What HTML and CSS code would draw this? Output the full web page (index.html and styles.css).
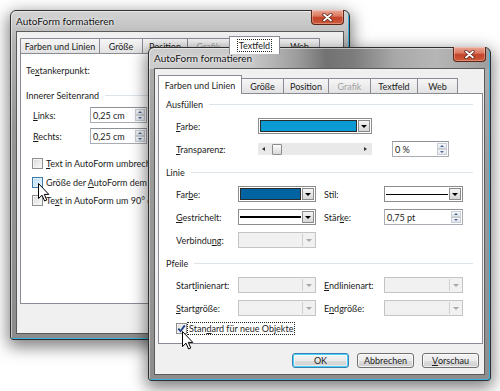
FILE: index.html
```html
<!DOCTYPE html>
<html lang="de">
<head>
<meta charset="utf-8">
<title>AutoForm formatieren</title>
<link rel="stylesheet" href="styles.css">
</head>
<body>
<div class="win back">
  <div class="titlebar">
    <span class="title">AutoForm formatieren</span>
    <span class="close"><svg width="11" height="9" viewBox="0 0 11 9"><path d="M2 1.5 L9 7.5 M9 1.5 L2 7.5" stroke="#5a2418" stroke-width="3.4" stroke-linecap="round"/><path d="M2 1.5 L9 7.5 M9 1.5 L2 7.5" stroke="#fff" stroke-width="1.8" stroke-linecap="round"/></svg></span>
  </div>
  <div class="client">
    <div class="tabs">
      <span class="tab w79">Farben und Linien</span>
      <span class="tab w43">Größe</span>
      <span class="tab w45">Position</span>
      <span class="tab w42 dis">Grafik</span>
      <span class="tab w50 active"><span class="focus">Textfeld</span></span>
      <span class="tab w40">Web</span>
    </div>
    <div class="panel bpanel">
      <div class="brow first">Te<u>x</u>tankerpunkt:</div>
      <div class="sec bsec"><span>Innerer Seitenrand</span></div>
      <div class="bfield">
        <span class="blbl"><u>L</u>inks:</span>
        <span class="spin bspin"><span class="v">0,25 cm</span><span class="sb"><i class="up"></i><i class="dn"></i></span></span>
      </div>
      <div class="bfield">
        <span class="blbl"><u>R</u>echts:</span>
        <span class="spin bspin"><span class="v">0,25 cm</span><span class="sb"><i class="up"></i><i class="dn"></i></span></span>
      </div>
      <div class="bcheck c1"><span class="cb"></span><span><u>T</u>ext in AutoForm umbrechen</span></div>
      <div class="bcheck c2"><span class="cb hover"></span><span>Größe der <u>A</u>utoForm dem Text anpassen</span></div>
      <div class="bcheck c3"><span class="cb"></span><span>Te<u>x</u>t in AutoForm um 90° drehen</span></div>
    </div>
  </div>
</div>

<div class="win front">
  <div class="titlebar">
    <span class="title">AutoForm formatieren</span>
    <span class="close"><svg width="11" height="9" viewBox="0 0 11 9"><path d="M2 1.5 L9 7.5 M9 1.5 L2 7.5" stroke="#5a2418" stroke-width="3.4" stroke-linecap="round"/><path d="M2 1.5 L9 7.5 M9 1.5 L2 7.5" stroke="#fff" stroke-width="1.8" stroke-linecap="round"/></svg></span>
  </div>
  <div class="client">
    <div class="tabs">
      <span class="tab w83 active">Farben und Linien</span>
      <span class="tab w42">Größe</span>
      <span class="tab w45">Position</span>
      <span class="tab w42 dis">Grafik</span>
      <span class="tab w47">Textfeld</span>
      <span class="tab w40">Web</span>
    </div>
    <div class="panel fpanel">
      <div class="sec first"><span>Ausfüllen</span></div>
      <div class="frow">
        <span class="lbl"><u>F</u>arbe:</span>
        <span class="combo wide"><span class="val"><span class="swatch cyan"></span></span><span class="btn"></span></span>
      </div>
      <div class="frow">
        <span class="lbl"><u>T</u>ransparenz:</span>
        <span class="slider"><span class="arr l"></span><span class="thumb"></span><span class="arr r"></span></span>
        <span class="spin pct"><span class="v">0 %</span><span class="sb"><i class="up"></i><i class="dn"></i></span></span>
      </div>

      <div class="sec"><span>Linie</span></div>
      <div class="grid">
        <span class="lbl">Far<u>b</u>e:</span>
        <span class="combo"><span class="val"><span class="swatch blue"></span></span><span class="btn"></span></span>
        <span class="lbl rl">St<u>i</u>l:</span>
        <span class="combo"><span class="val"><span class="line thin"></span></span><span class="btn"></span></span>

        <span class="lbl"><u>G</u>estrichelt:</span>
        <span class="combo"><span class="val"><span class="line thick"></span></span><span class="btn"></span></span>
        <span class="lbl rl">Stär<u>k</u>e:</span>
        <span class="spin"><span class="v">0,75 pt</span><span class="sb"><i class="up"></i><i class="dn"></i></span></span>

        <span class="lbl">Verbindu<u>n</u>g:</span>
        <span class="combo dis"><span class="val"></span><span class="btn"></span></span>
      </div>

      <div class="sec"><span>Pfeile</span></div>
      <div class="grid">
        <span class="lbl">Start<u>l</u>inienart:</span>
        <span class="combo dis"><span class="val"></span><span class="btn"></span></span>
        <span class="lbl rl"><u>E</u>ndlinienart:</span>
        <span class="combo dis"><span class="val"></span><span class="btn"></span></span>

        <span class="lbl"><u>S</u>tartgröße:</span>
        <span class="combo dis"><span class="val"></span><span class="btn"></span></span>
        <span class="lbl rl">E<u>n</u>dgröße:</span>
        <span class="combo dis"><span class="val"></span><span class="btn"></span></span>
      </div>

      <div class="fcheck">
        <span class="cb checked"><svg width="9" height="9" viewBox="0 0 9 9"><path d="M1.2 4.6 L3.6 7.2 L7.8 1.4" fill="none" stroke="#1e3f86" stroke-width="1.8"/></svg></span>
        <span class="focus">Stan<u>d</u>ard für neue Objekte</span>
      </div>
    </div>
    <div class="buttons">
      <span class="button default">OK</span>
      <span class="button">Abbrechen</span>
      <span class="button"><u>V</u>orschau</span>
    </div>
  </div>
</div>

<svg class="cursor cur1" width="12" height="19" viewBox="0 0 12 19"><path d="M0.5 0.5 L0.5 15.5 L4 12.2 L6.6 18 L8.8 17 L6.3 11.4 L10.8 11.4 Z" fill="#fff" stroke="#000" stroke-width="1" stroke-linejoin="round"/></svg>
<svg class="cursor cur2" width="12" height="19" viewBox="0 0 12 19"><path d="M0.5 0.5 L0.5 15.5 L4 12.2 L6.6 18 L8.8 17 L6.3 11.4 L10.8 11.4 Z" fill="#fff" stroke="#000" stroke-width="1" stroke-linejoin="round"/></svg>
</body>
</html>
```

FILE: styles.css
```css
* { box-sizing: border-box; }
html, body { margin: 0; padding: 0; }
body {
  width: 500px;
  height: 391px;
  overflow: hidden;
  position: relative;
  background: #fff;
  font-family: Lato, "Noto Sans", sans-serif;
  font-size: 9px;
  color: #1c1c1c;
}
u { text-decoration: underline; text-underline-offset: 1px; }

/* ---------- window frame ---------- */
.win {
  position: absolute;
  display: flex;
  flex-direction: column;
  border: 1px solid #2f2f2f;
  border-radius: 6px 6px 3px 3px;
  padding: 0 5px 5px;
  background:
    linear-gradient(180deg, rgba(255,255,255,.25), rgba(255,255,255,0) 30px),
    linear-gradient(180deg, #c4c4c4 0, #b0b0b0 40px, #959595 120px, #8c8c8c 100%);
  box-shadow:
    inset -1px -1px 0 #35b2e0,
    inset 1px 1px 0 rgba(255,255,255,.5),
    0 5px 16px 2px rgba(0,0,0,.5);
}
.back { left: 10px; top: 10px; width: 340px; height: 330px; }
.front {
  left: 148px; top: 47px; width: 343px; height: 334px;
  background:
    linear-gradient(90deg, #cdcdcd 0, #c9c9c9 30%, #9a9a9a 44%, #727272 52%, #7c7c7c 60%, #a8a8a8 72%, #b6b6b6 84%, #9e9e9e 100%) top / 100% 21px no-repeat,
    linear-gradient(180deg, #b0b0b0 0, #9a9a9a 120px, #8d8d8d 100%);
}
.titlebar {
  flex: none;
  height: 20px;
  display: flex;
  align-items: center;
}
.title {
  font-size: 10px;
  color: #111;
  text-shadow: 0 0 5px rgba(255,255,255,.9), 0 0 2px rgba(255,255,255,.9);
}
.close {
  margin-left: auto;
  align-self: flex-start;
  width: 33px;
  height: 15px;
  margin-top: -1px;
  border: 1px solid #5e2517;
  border-top: none;
  border-radius: 0 0 4px 4px;
  background: linear-gradient(180deg, #eaa896 0, #dc7a61 42%, #c4432a 55%, #cf5a3b 100%);
  box-shadow: inset 0 0 0 1px rgba(255,255,255,.3);
  display: flex;
  align-items: center;
  justify-content: center;
}
.front .close { margin-right: -1px; }
.client {
  flex: 1;
  display: flex;
  flex-direction: column;
  border: 1px solid #5a5a5a;
  background: #f0f0f0;
  padding: 3px 1px 0 3px;
}
.front .client { padding-top: 6px; }

/* ---------- tabs ---------- */
.tabs {
  flex: none;
  height: 18px;
  display: flex;
  align-items: flex-end;
  padding-left: 1px;
}
.tab {
  height: 15px;
  border: 1px solid #898c95;
  border-bottom: none;
  margin-left: -1px;
  background: linear-gradient(180deg, #f6f6f6, #e2e2e2);
  display: flex;
  align-items: center;
  justify-content: center;
  white-space: nowrap;
}
.tab.active {
  height: 19px;
  margin-bottom: -1px;
  background: #fff;
  position: relative;
  z-index: 1;
}
.back .tab.active { height: 18px; }
.tab.dis { color: #a4a4a4; }
.w40 { width: 41px; } .w42 { width: 43px; } .w43 { width: 44px; }
.w45 { width: 46px; } .w47 { width: 48px; } .w50 { width: 51px; }
.w79 { width: 80px; } .w83 { width: 84px; }
.focus { outline: 1px dotted #222; outline-offset: 0; padding: 0 1px; }

.panel {
  flex: none;
  background: #fff;
  border: 1px solid #898c95;
  display: flex;
  flex-direction: column;
}
.bpanel { height: 251px; padding: 9px 6px 0 5px; }
.fpanel { height: 251px; padding: 3px 9px 0 7px; }

/* ---------- section headers ---------- */
.sec {
  height: 14px;
  margin-top: 8px;
  display: flex;
  align-items: center;
  gap: 6px;
}
.sec::after {
  content: "";
  flex: 1;
  height: 1px;
  background: #dce3e9;
}
.sec.first { margin-top: 0; }

/* ---------- back panel ---------- */
.brow { height: 14px; display: flex; align-items: center; }
.bsec { margin-top: 11px; width: 160px; }
.bfield { height: 16px; margin-top: 5px; display: flex; align-items: center; padding-left: 7px; }
.blbl { width: 57px; }
.bspin { width: 57px; }
.bcheck { height: 14px; display: flex; align-items: center; gap: 3px; padding-left: 6px; white-space: nowrap; }
.c1 { margin-top: 12px; }
.c2 { margin-top: 5px; }
.c3 { margin-top: 4px; }

/* ---------- front panel ---------- */
.frow {
  height: 16px;
  margin-top: 7px;
  display: flex;
  align-items: center;
  padding-left: 10px;
}
.frow .lbl { width: 82px; }
.grid {
  margin-top: 7px;
  padding-left: 10px;
  display: grid;
  grid-template-columns: 62px 78px 68px 79px;
  grid-auto-rows: 16px;
  row-gap: 7px;
  align-items: center;
}
.lbl { white-space: nowrap; }
.rl { padding-left: 8px; }
.fcheck {
  margin-top: 5px;
  height: 14px;
  padding-left: 10px;
  display: flex;
  align-items: center;
  gap: 1px;
}

/* ---------- controls ---------- */
.combo {
  height: 16px;
  border: 1px solid #8c8c8c;
  background: #fff;
  display: flex;
  padding: 1px;
  gap: 1px;
}
.combo.wide { width: 114px; }
.combo .val { flex: 1; display: flex; align-items: center; }
.combo .btn {
  width: 12px;
  border: 1px solid #8a8a8a;
  background: linear-gradient(180deg, #f5f5f5, #d6d6d6);
  display: flex;
  align-items: center;
  justify-content: center;
}
.combo .btn::after {
  content: "";
  border-left: 3px solid transparent;
  border-right: 3px solid transparent;
  border-top: 3px solid #000;
}
.combo.dis { border-color: #c4c4c4; background: #f1f1f1; }
.combo.dis .btn { background: #f1f1f1; border: none; border-left: 1px solid #cfcfcf; }
.combo.dis .btn::after { border-top-color: #a8a8a8; }
.swatch { width: 100%; height: 100%; border: 1px solid #2a2a2a; }
.swatch.cyan { background: #0b9ad4; }
.swatch.blue { background: #0064a2; }
.line { width: 100%; background: #000; }
.line.thin { height: 1px; }
.line.thick { height: 2px; }

.slider {
  width: 114px;
  height: 12px;
  background: #e9e9e9;
  display: flex;
  align-items: center;
  padding: 0 5px 0 4px;
}
.arr { width: 0; height: 0; border-top: 2px solid transparent; border-bottom: 2px solid transparent; }
.arr.l { border-right: 3px solid #333; }
.arr.r { border-left: 3px solid #333; margin-left: auto; }
.thumb {
  width: 10px;
  height: 11px;
  margin-left: 7px;
  border: 1px solid #8d8d8d;
  border-radius: 1px;
  background: linear-gradient(180deg, #fdfdfd, #d8d8d8);
}
.pct { width: 57px; margin-left: 20px; }

.spin {
  height: 16px;
  border: 1px solid #a9acb3;
  border-top-color: #8e9196;
  background: #fff;
  display: flex;
}
.spin .v { flex: 1; display: flex; align-items: center; padding-left: 2px; white-space: nowrap; }
.sb { width: 11px; display: flex; flex-direction: column; gap: 0; padding: 1px 1px 1px 0; }
.sb i {
  flex: 1;
  border: 1px solid #c9ced6;
  background: linear-gradient(180deg, #f7f8fa, #e1e5eb);
  display: flex;
  align-items: center;
  justify-content: center;
}
.sb i::after { content: ""; border-left: 2px solid transparent; border-right: 2px solid transparent; }
.sb .up::after { border-bottom: 2px solid #4b6791; }
.sb .dn::after { border-top: 2px solid #4b6791; }

.cb {
  width: 11px;
  height: 11px;
  border: 1px solid #8e8f8f;
  background: linear-gradient(135deg, #d9d9d9, #fbfbfb);
  box-shadow: inset 0 0 0 1px #f4f4f4;
  display: flex;
  align-items: center;
  justify-content: center;
}
.cb.hover { border-color: #3d7bad; background: linear-gradient(135deg, #b9dcf3, #e8f5fd); box-shadow: inset 0 0 0 1px #def0fb; }
.cb.checked { background: linear-gradient(135deg, #dcdcdc, #fff); }

/* ---------- buttons ---------- */
.buttons {
  flex: none;
  display: flex;
  justify-content: flex-end;
  gap: 8px;
  padding: 9px 4px 0 0;
}
.button {
  width: 57px;
  height: 15px;
  border: 1px solid #707070;
  border-radius: 3px;
  background: linear-gradient(180deg, #f3f3f3 0, #ebebeb 50%, #dddddd 51%, #cfcfcf 100%);
  box-shadow: inset 0 0 0 1px rgba(255,255,255,.7);
  display: flex;
  align-items: center;
  justify-content: center;
}
.button.default {
  border-color: #3c7fb1;
  box-shadow: inset 0 0 0 1px #48d2fb, inset 0 0 0 2px rgba(255,255,255,.5);
}

/* ---------- mouse pointers ---------- */
.cursor { position: absolute; }
.cur1 { left: 38px; top: 183px; }
.cur2 { left: 182px; top: 331px; }
```
